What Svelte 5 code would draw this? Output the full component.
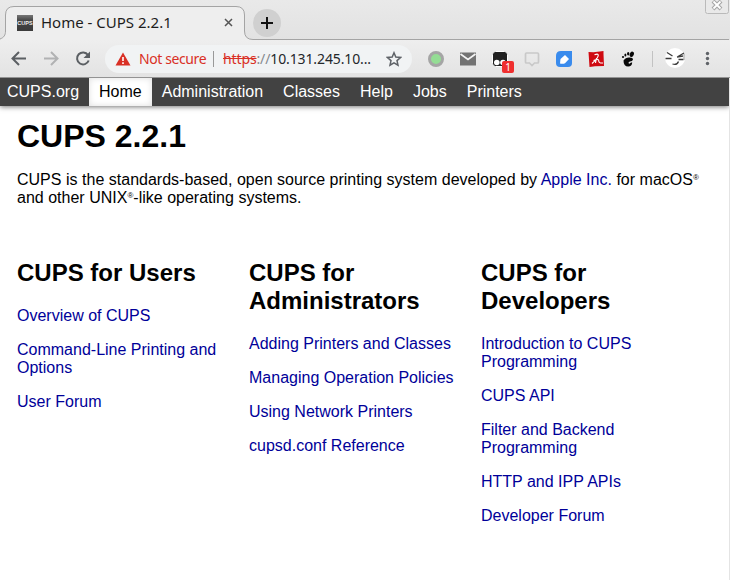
<script>
  const nav = ['CUPS.org', 'Home', 'Administration', 'Classes', 'Help', 'Jobs', 'Printers'];
  const columns = [
    { title: 'CUPS for Users', links: ['Overview of CUPS', 'Command-Line Printing and Options', 'User Forum'] },
    { title: 'CUPS for Administrators', links: ['Adding Printers and Classes', 'Managing Operation Policies', 'Using Network Printers', 'cupsd.conf Reference'] },
    { title: 'CUPS for Developers', links: ['Introduction to CUPS Programming', 'CUPS API', 'Filter and Backend Programming', 'HTTP and IPP APIs', 'Developer Forum'] }
  ];
</script>

<div class="window">
  <header class="chrome">
    <div class="tabs">
      <svg class="outline" width="730" height="40" viewBox="0 0 730 40">
        <path d="M0 39.500C4 38 5.500 36 5.500 31V15Q5.500 6.500 14 6.500H236Q244.500 6.500 244.500 15V31Q244.500 39.500 253 39.500H729V40H0Z" fill="#eeeeee" />
        <path d="M0 39C4 37.500 5.500 35 5.500 31V15Q5.500 6.500 14 6.500H236Q244.500 6.500 244.500 15V31Q244.500 39.500 253 39.500H729" fill="none" stroke="#a4a4a4" />
      </svg>
      <div class="tab">
        <span class="favicon">CUPS</span>
        <span class="tab-title">Home - CUPS 2.2.1</span>
        <svg class="tab-close" width="9" height="9" viewBox="0 0 9 9"><path d="M1 1l7 7M8 1L1 8" stroke="#555" stroke-width="1.500" /></svg>
      </div>
      <div class="new-tab"><svg width="12" height="12" viewBox="0 0 12 12"><path d="M6 0v12M0 6h12" stroke="#111" stroke-width="2" /></svg></div>
      <svg class="win-close" width="24" height="14" viewBox="0 0 24 14">
        <path d="M.5 0V11.500Q.5 13.500 2.500 13.500H21.500Q23.500 13.500 23.500 11.500V0" fill="#e9e9e9" stroke="#bababa" />
        <path d="M8 1l8 8M16 1l-8 8" stroke="#a6a6a6" stroke-width="4" />
        <path d="M8.500 1.500l7 7M15.500 1.500l-7 7" stroke="#fff" stroke-width="1.800" />
      </svg>
    </div>

    <div class="toolbar">
      <svg class="history" width="92" height="20" viewBox="0 0 92 20" fill="none" stroke-width="2">
        <path d="M26 9.500H13M19 3L12.500 9.500l6.500 6.500" stroke="#5b5f63" />
        <path d="M44 9.500H57M51 3l6.500 6.500-6.500 6.500" stroke="#b1b2b3" />
        <path d="M88 6A6 6 0 1 0 88.700 11.500" stroke="#5b5f63" />
        <path d="M90 2.500v6.500h-6.500z" fill="#5b5f63" />
      </svg>
      <div class="address">
        <svg class="warning" width="16" height="14" viewBox="0 0 16 14"><path d="M8 .5L15.500 13.500H.5Z" fill="#d93025" /><path d="M8 5v4M8 10.200v1.800" stroke="#fff" stroke-width="1.600" /></svg>
        <span class="insecure">Not secure</span>
        <span class="divider"></span>
        <span class="url"><s>https</s><i>://</i>10.131.245.10...</span>
        <svg class="star" width="16" height="16" viewBox="0 0 16 16"><path d="M8 1.800l1.800 4.300 4.700.4-3.500 3.100 1 4.600-4-2.400-4 2.400 1-4.600-3.500-3.100 4.700-.4z" fill="none" stroke="#5f6368" stroke-width="1.500" /></svg>
      </div>
      <svg class="extensions" width="318" height="37" viewBox="412 40 318 37">
        <circle cx="436" cy="59" r="6.500" fill="#94dd94" stroke="#a5a5a5" stroke-width="3" />
        <rect x="460" y="52.500" width="16" height="13" fill="#737373" />
        <path d="M460.500 54l7.500 5.500 7.500-5.500" fill="none" stroke="#f4f4f4" stroke-width="1.700" />
        <rect x="492.500" y="51.500" width="15" height="15" rx="3" fill="#222" stroke="#fff" />
        <circle cx="496.800" cy="62.500" r="2.800" fill="#fff" /><circle cx="503" cy="62.500" r="2.800" fill="#fff" />
        <rect x="502" y="61" width="12" height="12" rx="2" fill="#ef2f2f" />
        <text x="508" y="70.500" text-anchor="middle" fill="#fff" font-size="10">1</text>
        <path d="M526.500 53h11q1 0 1 1v8q0 1-1 1h-3l-2.500 2.500-2.500-2.500h-3q-1 0-1-1v-8q0-1 1-1z" fill="none" stroke="#c9c9c9" stroke-width="1.700" />
        <path d="M561 51h11v12q0 4-4 4h-8q-4 0-4-4v-7q0-5 5-5z" fill="#398bed" />
        <path d="M560 63.500l.5-4.500 4.500-4 4 4-4 4.200q-2 1-5 .3z" fill="#fff" />
        <path d="M588.500 52l5 .3 10-1.300v3l.5 12-9 .3-5.500.7z" fill="#cf0a12" />
        <path d="M594.500 54.800q3.500-1.500 3.800.2 0 3-6.300 8.500M593.500 60.500q5-2 5.200 0-.2 3 4.300 2.500M596.500 58l-1 5" fill="none" stroke="#fff" stroke-width="1.100" />
        <path d="M623.500 60.500q2-3 5.500-3 4-.2 4 2-.5 2-3 2-1.500.2-1.500 1.500.8 1.500 2.500-.5h1.200q-.2 4-4 4-4.700 0-4.700-6z" fill="#090909" />
        <ellipse cx="631.800" cy="54.300" rx="2" ry="2.800" fill="#090909" transform="rotate(22 631.800 54.300)" />
        <ellipse cx="628.200" cy="53.800" rx="1.200" ry="1.800" fill="#090909" /><ellipse cx="625.400" cy="55" rx="1" ry="1.500" fill="#090909" /><circle cx="623" cy="57" r="1.100" fill="#090909" />
        <path d="M652.500 51v16" stroke="#c2c2c2" />
        <circle cx="675" cy="58" r="10" fill="#fff" />
        <path d="M667 52.500l5.500 3.500M665.500 58.500h6M684 53l-6 3.500M677 57l6-1M678.500 59.500h5M672.500 64q4.500 1.500 6-2.500" fill="none" stroke="#3b3b3b" stroke-width="1.300" />
        <path d="M684 54v6" stroke="#999" />
        <g fill="#5f6368"><circle cx="707.500" cy="53.500" r="1.700" /><circle cx="707.500" cy="58.500" r="1.700" /><circle cx="707.500" cy="63.500" r="1.700" /></g>
      </svg>
    </div>
  </header>
  <div class="page">
    <nav>{#each nav as item}<a href="#top" class:active={item === 'Home'}>{item}</a>{/each}</nav>
    <main>
      <h1>CUPS 2.2.1</h1>
      <p class="intro">CUPS is the standards-based, open source printing system developed by <a href="#apple">Apple Inc.</a> for macOS<sup>®</sup> and other UNIX<sup>®</sup>-like operating systems.</p>
      <div class="columns">
        {#each columns as column}
          <section>
            <h2>{column.title}</h2>
            {#each column.links as link}<p><a href="#help">{link}</a></p>{/each}
          </section>
        {/each}
      </div>
    </main>
  </div>
</div>

<style>
  .window { width: 730px; height: 580px; overflow: hidden; background: #e4e4e4; }
  .chrome { height: 78px; box-sizing: border-box; border-bottom: 1px solid #939393; font-family: "Noto Sans", sans-serif; }
  .tabs { position: relative; display: flex; height: 40px; background: linear-gradient(#e9e9e9, #e2e2e2); }
  .outline { position: absolute; inset: 0; }
  .tab { position: relative; display: flex; align-items: center; width: 245px; height: 33px; padding-top: 6px; }
  .favicon { width: 16px; height: 16px; margin-left: 17px; background: linear-gradient(#777, #454545 35%, #3b3b3b); color: #eee; font: bold 5.5px/16px "Liberation Sans", sans-serif; text-align: center; }
  .tab-title { margin-left: 8px; padding-bottom: 2px; width: 183px; font-size: 15px; line-height: 20px; color: #1d1d1d; white-space: nowrap; }
  .new-tab { position: relative; display: flex; align-items: center; justify-content: center; width: 28px; height: 28px; margin: 9px 0 0 8px; border-radius: 50%; background: #d0d0d0; }
  .win-close { position: absolute; right: 1px; top: 0; }
  .toolbar { display: flex; align-items: center; height: 37px; background: linear-gradient(#eeeeee, #e3e3e3); }
  .history { flex: none; }
  .address { display: flex; align-items: center; flex: none; width: 307px; height: 28px; margin-left: 13px; border-radius: 14px; background: #f1f3f4; font-size: 14px; white-space: nowrap; }
  .warning { margin-left: 10px; }
  .insecure { width: 67px; margin-left: 8px; color: #d93025; letter-spacing: -.4px; }
  .divider { width: 1px; height: 16px; margin: 0 9px 0 7px; background: #999; }
  .url { width: 149px; color: #24272a; letter-spacing: -.12px; }
  .url s { color: #d93025; letter-spacing: -.12px; }
  .url i { font-style: normal; color: #858a8e; }
  .star { margin-left: 14px; }
  .extensions { flex: none; }
  .page { width: 729px; height: 502px; background: #fff; font: 16px/18px "Liberation Sans", Arial, sans-serif; color: #000; }
  nav { display: flex; height: 28px; background: #424242; box-shadow: 0 1px 5px #777; clip-path: inset(0 0 -8px 0); }
  nav a { padding: 0 10px; line-height: 27px; color: #fff; text-decoration: none; }
  nav a:first-child { padding-left: 7px; }
  nav a.active { background: #fff; color: #000; box-shadow: inset 0 0 6px #ddd; }
  main { padding: 12px 17px 0; }
  h1 { margin: 0; font-size: 32px; line-height: 36px; }
  p { margin: 16px 0; }
  .intro { margin-top: 17px; word-spacing: .07px; }
  main a { color: #000099; text-decoration: none; }
  sup { font-size: 8px; line-height: 0; vertical-align: 5px; }
  .columns { display: flex; margin-top: 52px; gap: 30px; }
  section { width: 202px; }
  section:nth-child(2) { width: 206px; margin-right: -4px; }
  h2 { margin: 0 0 20px; font-size: 24px; line-height: 28px; }
</style>
